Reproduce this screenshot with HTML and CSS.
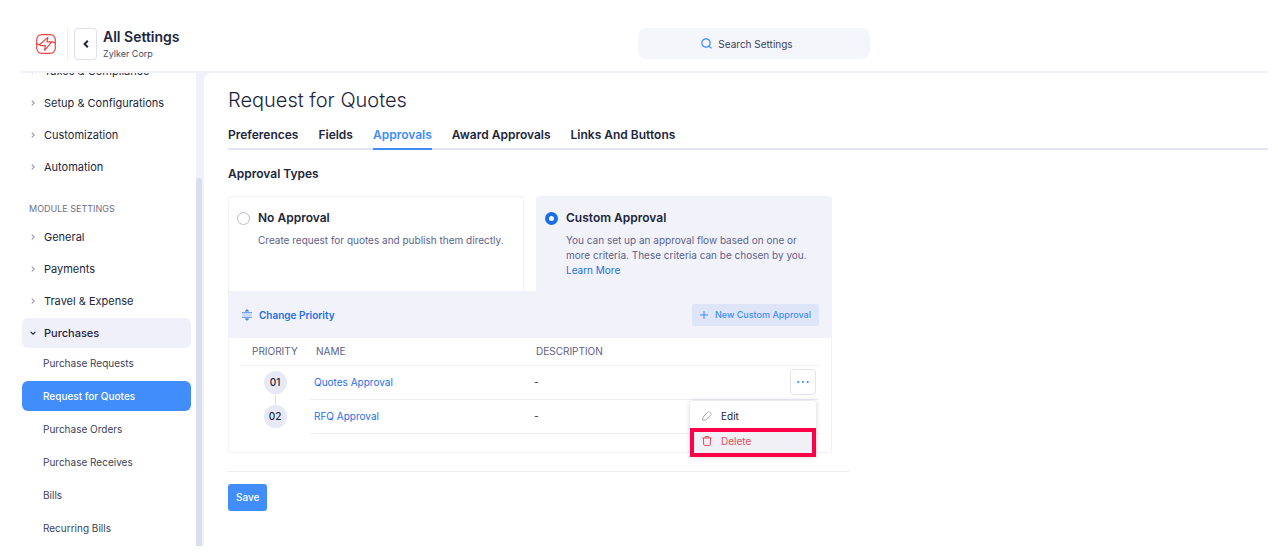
FILE: index.html
```html
<!DOCTYPE html>
<html lang="en">
  <head>
    <meta charset="utf-8">
    <title>Request for Quotes - All Settings</title>
    <meta name="viewport" content="width=device-width, initial-scale=1.0">
    <link rel="stylesheet" href="styles.css">
  </head>
  <body>
    <svg class="sprite" aria-hidden="true">
      <symbol id="chevron" viewBox="0 0 8 8"><path d="M2.8 1.6 5.2 4 2.8 6.4" fill="none" stroke="currentColor" stroke-width="1.2"/></symbol>
    </svg>

    <header class="topbar">
      <div class="brand">
        <a href="#" class="logo" aria-label="Home">
          <svg width="20" height="20" viewBox="0 0 20 20" fill="none" stroke="#ee4444" stroke-width="1.2" stroke-linejoin="round">
            <rect x="0.7" y="0.7" width="18.6" height="18.6" rx="5"/>
            <path d="M.8 9.4Q2.4 11.4 4 10.2L11.8 3.4 11 7.8H15.8L8.6 16.4 9.4 11.6H4.6L3.4 10.6"/>
            <path d="M15.4 8Q17.6 7.2 19.2 9.4"/>
          </svg>
        </a>
        <button type="button" class="back" aria-label="Back">
          <svg width="8" height="10" viewBox="0 0 8 10"><path d="M5.8 1.8 2.6 5 5.8 8.2" fill="none" stroke="currentColor" stroke-width="2"/></svg>
        </button>
        <div>
          <div class="brand-title">All Settings</div>
          <div class="brand-org">Zylker Corp</div>
        </div>
      </div>
      <button type="button" class="search">
        <svg width="11" height="11" viewBox="0 0 11 11" fill="none" stroke="#408dfb" stroke-width="1.2"><circle cx="5" cy="5" r="4.2"/><path d="M7.6 7.8 10.4 10.4"/></svg>
        Search Settings
      </button>
    </header>

    <div class="layout">
      <nav class="sidebar" aria-label="Settings">
        <ul class="group group-first">
          <li><a href="#"><svg><use href="#chevron"/></svg>Taxes &amp; Compliance</a></li>
          <li><a href="#"><svg><use href="#chevron"/></svg>Setup &amp; Configurations</a></li>
          <li><a href="#"><svg><use href="#chevron"/></svg>Customization</a></li>
          <li><a href="#"><svg><use href="#chevron"/></svg>Automation</a></li>
        </ul>
        <h2 class="group-title">MODULE SETTINGS</h2>
        <ul class="group">
          <li><a href="#"><svg><use href="#chevron"/></svg>General</a></li>
          <li><a href="#"><svg><use href="#chevron"/></svg>Payments</a></li>
          <li><a href="#"><svg><use href="#chevron"/></svg>Travel &amp; Expense</a></li>
          <li><a href="#" class="open"><svg><use href="#chevron"/></svg>Purchases</a></li>
        </ul>
        <ul class="subgroup">
          <li><a href="#">Purchase Requests</a></li>
          <li><a href="#" class="current" aria-current="page">Request for Quotes</a></li>
          <li><a href="#">Purchase Orders</a></li>
          <li><a href="#">Purchase Receives</a></li>
          <li><a href="#">Bills</a></li>
          <li><a href="#">Recurring Bills</a></li>
        </ul>
      </nav>
      <div class="track"><div class="thumb"></div></div>

      <main class="content">
        <h1>Request for Quotes</h1>
        <nav class="tabs" aria-label="Request for Quotes">
          <a href="#">Preferences</a>
          <a href="#">Fields</a>
          <a href="#" class="active">Approvals</a>
          <a href="#">Award Approvals</a>
          <a href="#">Links And Buttons</a>
        </nav>

        <form method="get" action="#">
          <h2 class="section-title">Approval Types</h2>
          <div class="types">
            <div class="type">
              <input type="radio" name="approval" id="none">
              <div>
                <label for="none">No Approval</label>
                <p>Create request for quotes and publish them directly.</p>
              </div>
            </div>
            <div class="type selected">
              <input type="radio" name="approval" id="custom" checked>
              <div>
                <label for="custom">Custom Approval</label>
                <p>You can set up an approval flow based on one or more criteria. These criteria can be chosen by you. <a href="#">Learn More</a></p>
              </div>
            </div>
          </div>

          <div class="panel">
            <div class="panel-bar">
              <button type="button" class="priority">
                <svg width="10" height="12" viewBox="0 0 10 12"><path d="M5 .4 6.8 2.2H3.2ZM5 11.6 6.8 9.8H3.2Z" fill="#2f74e8" stroke="#2f74e8" stroke-width=".5"/><path d="M0 3.5H10M0 8.5H10" stroke="#6d9ff2"/><path d="M0 5H10M0 7H10" stroke="#a4c3f7"/></svg>
                Change Priority
              </button>
              <button type="button" class="new">
                <svg width="8" height="8" viewBox="0 0 8 8"><path d="M4 0V8M0 4H8" stroke="currentColor"/></svg>
                New Custom Approval
              </button>
            </div>
            <table class="approvals">
              <thead>
                <tr><th class="col-order">PRIORITY</th><th class="col-name">NAME</th><th>DESCRIPTION</th><th class="col-menu" aria-label="Actions"></th></tr>
              </thead>
              <tbody>
                <tr>
                  <td class="order"><span>01</span></td>
                  <td><a href="#">Quotes Approval</a></td>
                  <td>-</td>
                  <td class="actions">
                    <button type="button" class="more" aria-label="More actions">
                      <svg width="12" height="4" viewBox="0 0 12 4" fill="#408dfb"><circle cx="1.3" cy="2" r="1.1"/><circle cx="6" cy="2" r="1.1"/><circle cx="10.7" cy="2" r="1.1"/></svg>
                    </button>
                    <div class="menu">
                      <button type="button">
                        <svg width="10" height="10" viewBox="0 0 10 10" fill="none" stroke="#a5a5c0" stroke-linejoin="round"><path d="M.7 9.2 1 6.2 5.8 1.2C6.4.6 7.2.5 7.9 1.1L8.8 2C9.4 2.7 9.3 3.5 8.8 4.1L3.8 9Z"/></svg>
                        Edit
                      </button>
                      <button type="button" class="delete">
                        <svg width="10" height="10" viewBox="0 0 10 10" fill="none" stroke="#e54a5b"><path d="M.3 2H9.7M3.2 2V.6H6.8V2M1.4 2 1.7 8.6Q1.8 9.4 2.6 9.4H7.4Q8.2 9.4 8.3 8.6L8.6 2"/></svg>
                        Delete
                      </button>
                    </div>
                  </td>
                </tr>
                <tr>
                  <td class="order"><span>02</span></td>
                  <td><a href="#">RFQ Approval</a></td>
                  <td>-</td>
                  <td></td>
                </tr>
              </tbody>
            </table>
          </div>

          <div class="footer">
            <button type="submit" class="save">Save</button>
          </div>
        </form>
      </main>
    </div>
  </body>
</html>
```
FILE: styles.css
```css
* {
  box-sizing: border-box;
}
body {
  display: flex;
  flex-direction: column;
  height: 100vh;
  margin: 0;
  padding: 0 10px 10px 20px;
  background-color: #fff;
  color: #21263c;
  font: 11px/16px Inter, sans-serif;
}
h1, h2, p, ul {
  margin: 0;
  padding: 0;
  list-style: none;
}
a {
  color: #256fe6;
  text-decoration: none;
}
button {
  border: 0;
  background: none;
  color: inherit;
  font: inherit;
  cursor: pointer;
}
svg {
  flex: none;
}
.sprite {
  display: none;
}

/* top bar */
.topbar {
  display: flex;
  flex: none;
  padding-top: 28px;
  border-bottom: 2px solid #f1f1fb;
}
.brand {
  display: flex;
  flex: 1;
  align-items: center;
  height: 32px;
  margin-bottom: 11px;
}
.logo {
  display: flex;
  align-items: center;
  height: 32px;
  padding: 0 11px 0 16px;
  border-right: 1px solid #ececf4;
}
.back {
  display: flex;
  align-items: center;
  justify-content: center;
  width: 23px;
  height: 32px;
  margin: 0 6px;
  padding: 0;
  border: 1px solid #dedeec;
  border-radius: 4px;
}
.brand-title {
  padding-top: 2px;
  font-size: 14px;
  font-weight: 600;
  line-height: 18px;
}
.brand-org {
  color: #454a68;
  font-size: 9px;
}
.search {
  display: flex;
  align-items: center;
  justify-content: center;
  gap: 6px;
  width: 232px;
  height: 31px;
  margin-right: 398px;
  padding: 0 20px 0 6px;
  border-radius: 8px;
  background-color: #f5f6fb;
  color: #3a3f58;
  font-size: 10px;
}

/* sidebar */
.layout {
  display: flex;
  flex: 1;
  min-height: 0;
  background-color: #f1f1fb;
}
.sidebar {
  flex: none;
  width: 176px;
  overflow: hidden;
  padding: 0 5px 0 2px;
  background-color: #fff;
}
.group, .subgroup {
  display: grid;
  gap: 2px;
}
.group-first {
  margin-top: -17px;
}
.sidebar a {
  display: flex;
  align-items: center;
  height: 30px;
  border-radius: 6px;
  color: #21263c;
}
.group svg {
  width: 8px;
  height: 8px;
  margin: 0 7px;
  color: #9a9db4;
}
.group .open {
  background-color: #f0f0fb;
  font-weight: 500;
}
.group .open svg {
  color: #21263c;
  transform: rotate(90deg);
}
.group-title {
  padding: 19px 7px 5px;
  color: #6c718a;
  font-size: 9px;
  font-weight: 400;
}
.subgroup {
  gap: 3px;
}
.subgroup a {
  padding-left: 21px;
  color: #3a3f58;
  font-size: 10px;
}
.subgroup .current {
  background-color: #408dfb;
  color: #fff;
  font-weight: 500;
}
.track {
  flex: none;
  width: 8px;
  padding-top: 105px;
}
.thumb {
  width: 6px;
  height: 100%;
  border-radius: 3px 3px 0 0;
  background-color: #d9deee;
}

/* page */
.content {
  flex: 1;
  padding: 14px 0 0 24px;
  border-radius: 8px 0 0 0;
  background-color: #fff;
}
h1 {
  font-size: 20px;
  font-weight: 300;
  line-height: 26px;
}
.tabs {
  display: flex;
  gap: 20px;
  height: 37px;
  border-bottom: 2px solid #e3e4f3;
}
.tabs a {
  height: 37px;
  padding-top: 14px;
  color: #21263c;
  font-size: 12px;
  font-weight: 600;
}
.tabs .active {
  border-bottom: 2px solid #408dfb;
  color: #408dfb;
}
.section-title {
  padding: 16px 0 14px;
  font-size: 12px;
  font-weight: 600;
}
.types, .panel {
  max-width: 604px;
}
.types {
  display: grid;
  grid-template-columns: 1fr 1fr;
  gap: 12px;
}
.type {
  display: flex;
  align-items: flex-start;
  gap: 8px;
  min-height: 95px;
  padding: 13px 16px 11px 8px;
  border: 1px solid #f1f1fb;
  border-bottom: 0;
  border-radius: 3px 3px 0 0;
}
.type.selected {
  background-color: #f2f2fb;
}
.type input {
  flex: none;
  width: 13px;
  height: 13px;
  margin: 2px 0 0;
  border: 1px solid #b9bad0;
  border-radius: 50%;
  background-color: #fff;
  appearance: none;
}
.type input:checked {
  border: 4px solid #1a6de8;
}
.type label {
  font-size: 12px;
  font-weight: 600;
}
.type p {
  margin-top: 7px;
  color: #5c628a;
  font-size: 10px;
  line-height: 15px;
}
.panel {
  padding-bottom: 18px;
  border: 1px solid #f1f1fb;
  border-top: 0;
  border-radius: 0 0 3px 3px;
}
.panel-bar {
  display: flex;
  align-items: center;
  justify-content: space-between;
  height: 47px;
  padding: 0 12px 0 13px;
  background-color: #f2f2fb;
}
.panel-bar button {
  display: flex;
  align-items: center;
  gap: 7px;
}
.priority {
  padding: 0;
  color: #256fe6;
  font-size: 10px;
  font-weight: 600;
}
.new {
  height: 22px;
  padding: 0 8px;
  border-radius: 2px;
  background-color: #dfe5f9;
  color: #408dfb;
  font-size: 9px;
  font-weight: 500;
}

/* approvals list */
.approvals {
  width: calc(100% - 23px);
  margin: 0 12px 0 11px;
  border-collapse: collapse;
  table-layout: fixed;
}
.approvals th {
  height: 27px;
  padding: 0 6px;
  border-bottom: 1px solid #f1f1f6;
  color: #5c628a;
  font-size: 10px;
  font-weight: 400;
  text-align: left;
}
.approvals td {
  height: 34px;
  padding: 0 4px;
  border-bottom: 1px solid #ededf6;
  font-size: 10px;
}
.approvals .col-order {
  width: 70px;
  padding-left: 12px;
}
.col-name {
  width: 220px;
}
.col-menu {
  width: 48px;
}
.approvals .order {
  position: relative;
  border-bottom: 0;
  text-align: center;
}
.order span {
  display: inline-block;
  width: 23px;
  height: 23px;
  border-radius: 50%;
  background-color: #e8e9f6;
  font-weight: 500;
  line-height: 23px;
}
tr:first-child .order::after {
  content: "";
  position: absolute;
  top: 28px;
  left: 50%;
  height: 11px;
  border-left: 1px solid #dfe2f5;
}
.approvals .actions {
  position: relative;
  padding: 0 3px 0 0;
}
.more {
  display: flex;
  align-items: center;
  justify-content: center;
  width: 26px;
  height: 26px;
  margin-left: auto;
  padding: 0;
  border: 1px solid #e2e3ef;
  border-radius: 4px;
}
.menu {
  position: absolute;
  top: 35px;
  right: 3px;
  z-index: 1;
  width: 126px;
  border-radius: 3px;
  background-color: #fff;
  box-shadow: 0 0 5px rgba(30, 35, 70, .2);
}
.menu button {
  display: flex;
  align-items: center;
  gap: 9px;
  width: 100%;
  height: 27px;
  padding: 3px 12px 0;
}
.menu .delete {
  height: 29px;
  padding: 0 8px 3px;
  border: 4px solid #fd0049;
  background-color: #f0f0f6;
  color: #e54a5b;
}

.footer {
  max-width: 621px;
  margin-top: 18px;
  padding-top: 12px;
  border-top: 1px solid #ededf6;
}
.save {
  height: 27px;
  padding: 0 8px;
  border-radius: 3px;
  background-color: #408dfb;
  color: #fff;
  font-size: 10px;
  font-weight: 500;
}
```
